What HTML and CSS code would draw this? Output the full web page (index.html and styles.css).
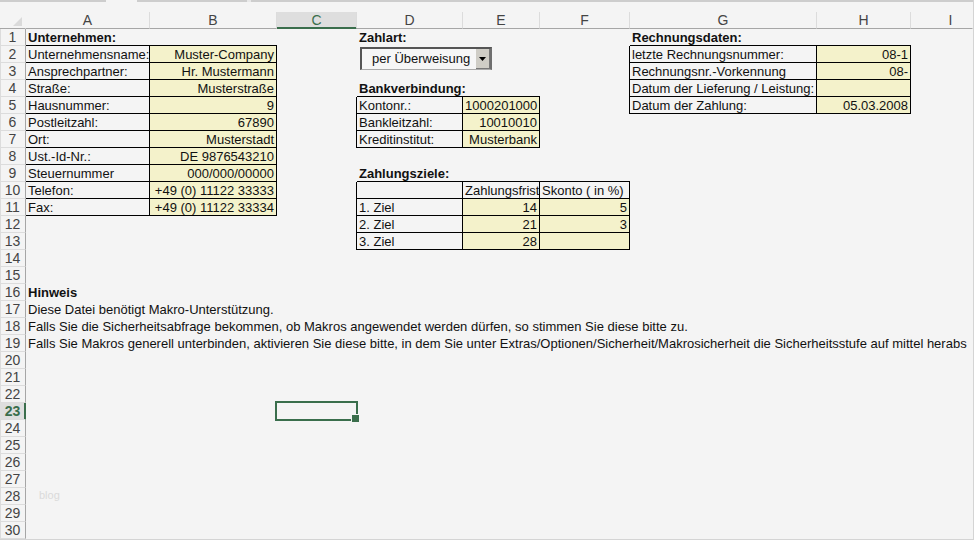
FILE: index.html
```html
<!DOCTYPE html>
<html lang="de">
<head>
<meta charset="utf-8">
<title>Rechnungsdaten</title>
<link rel="stylesheet" href="styles.css">
</head>
<body>
<div class="window">
<div class="strip"><span class="tab"></span><span class="seam"></span></div>
<table class="sheet">
<colgroup>
<col class="c-num"><col class="c-a"><col class="c-b"><col class="c-c"><col class="c-d"><col class="c-e"><col class="c-f"><col class="c-g"><col class="c-h"><col>
</colgroup>
<thead>
<tr><th class="corner"><svg viewBox="0 0 9 9" width="9" height="9" aria-hidden="true"><path d="M9 0V9H0Z" fill="#dadada"/></svg></th><th>A</th><th>B</th><th class="active">C</th><th>D</th><th>E</th><th>F</th><th>G</th><th>H</th><th class="last">I</th></tr>
</thead>
<tbody>
<tr><th>1</th><td class="b title">Unternehmen:</td><td class="b"></td><td></td><td class="title">Zahlart:</td><td></td><td></td><td class="b title">Rechnungsdaten:</td><td class="b"></td><td></td></tr>
<tr><th>2</th><td class="box">Unternehmensname:</td><td class="box val">Muster-Company</td><td></td><td class="control" colspan="2" rowspan="2"><div class="combo"><select aria-label="Zahlart"><option>per Überweisung</option></select><span class="drop"><svg viewBox="0 0 7 4" width="7" height="4" aria-hidden="true"><path d="M0 0H7L3.5 4Z"/></svg></span></div></td><td class="r"></td><td class="box">letzte Rechnungsnummer:</td><td class="box val">08-1</td><td></td></tr>
<tr><th>3</th><td class="box">Ansprechpartner:</td><td class="box val">Hr. Mustermann</td><td></td><td class="r"></td><td class="box">Rechnungsnr.-Vorkennung</td><td class="box val">08-</td><td></td></tr>
<tr><th>4</th><td class="box">Straße:</td><td class="box val">Musterstraße</td><td></td><td class="b title">Bankverbindung:</td><td class="b"></td><td class="r"></td><td class="box">Datum der Lieferung / Leistung:</td><td class="box val"></td><td></td></tr>
<tr><th>5</th><td class="box">Hausnummer:</td><td class="box val">9</td><td class="r"></td><td class="box">Kontonr.:</td><td class="box val">1000201000</td><td class="r"></td><td class="box">Datum der Zahlung:</td><td class="box val">05.03.2008</td><td></td></tr>
<tr><th>6</th><td class="box">Postleitzahl:</td><td class="box val">67890</td><td class="r"></td><td class="box">Bankleitzahl:</td><td class="box val">10010010</td><td colspan="4"></td></tr>
<tr><th>7</th><td class="box">Ort:</td><td class="box val">Musterstadt</td><td class="r"></td><td class="box">Kreditinstitut:</td><td class="box val">Musterbank</td><td colspan="4"></td></tr>
<tr><th>8</th><td class="box">Ust.-Id-Nr.:</td><td class="box val">DE 9876543210</td><td colspan="7"></td></tr>
<tr><th>9</th><td class="box">Steuernummer</td><td class="box val">000/000/00000</td><td></td><td class="b title">Zahlungsziele:</td><td class="b"></td><td class="b"></td><td colspan="3"></td></tr>
<tr><th>10</th><td class="box">Telefon:</td><td class="box val">+49 (0) 11122 33333</td><td class="r"></td><td class="box"></td><td class="box">Zahlungsfrist</td><td class="box">Skonto ( in %)</td><td colspan="3"></td></tr>
<tr><th>11</th><td class="box">Fax:</td><td class="box val">+49 (0) 11122 33334</td><td class="r"></td><td class="box">1. Ziel</td><td class="box val">14</td><td class="box val">5</td><td colspan="3"></td></tr>
<tr><th>12</th><td></td><td></td><td class="r"></td><td class="box">2. Ziel</td><td class="box val">21</td><td class="box val">3</td><td colspan="3"></td></tr>
<tr><th>13</th><td></td><td></td><td class="r"></td><td class="box">3. Ziel</td><td class="box val">28</td><td class="box val"></td><td colspan="3"></td></tr>
<tr><th>14</th><td colspan="9"></td></tr>
<tr><th>15</th><td colspan="9"></td></tr>
<tr><th>16</th><td class="title" colspan="9">Hinweis</td></tr>
<tr><th>17</th><td colspan="9">Diese Datei benötigt Makro-Unterstützung.</td></tr>
<tr><th>18</th><td colspan="9">Falls Sie die Sicherheitsabfrage bekommen, ob Makros angewendet werden dürfen, so stimmen Sie diese bitte zu.</td></tr>
<tr><th>19</th><td class="clip" colspan="9">Falls Sie Makros generell unterbinden, aktivieren Sie diese bitte, in dem Sie unter Extras/Optionen/Sicherheit/Makrosicherheit die Sicherheitsstufe auf mittel herabs</td></tr>
<tr><th>20</th><td colspan="9"></td></tr>
<tr><th>21</th><td colspan="9"></td></tr>
<tr><th>22</th><td colspan="9"></td></tr>
<tr><th class="active">23</th><td></td><td></td><td class="selected"><span class="cursor"></span></td><td colspan="6"></td></tr>
<tr><th>24</th><td colspan="9"></td></tr>
<tr><th>25</th><td colspan="9"></td></tr>
<tr><th>26</th><td colspan="9"></td></tr>
<tr><th>27</th><td colspan="9"></td></tr>
<tr><th>28</th><td class="mark" colspan="9">blog</td></tr>
<tr><th>29</th><td colspan="9"></td></tr>
<tr><th>30</th><td colspan="9"></td></tr>
</tbody>
</table>
</div>
</body>
</html>
```
FILE: styles.css
```css
* {
  box-sizing: border-box;
}

body {
  margin: 0;
  background: #f4f4f4;
  color: #111;
  font-family: "Liberation Sans", Arial, sans-serif;
  font-size: 13px;
  line-height: 16px;
}

.window {
  overflow: hidden;
  border-right: 1px solid #d4d4d4;
  border-bottom: 1px solid #d4d4d4;
}

.strip {
  display: flex;
  gap: 110px;
  height: 2px;
  margin-bottom: 10px;
  padding-left: 106px;
  background: #cdcdcd;
}

.tab {
  width: 31px;
  background: #f4f4f4;
}

.seam {
  width: 4px;
  background: #e8e8e8;
}

.sheet {
  width: 100%;
  table-layout: fixed;
  border-collapse: separate;
  border-spacing: 0;
}

.c-num { width: 26px; }
.c-a { width: 124px; }
.c-b { width: 127px; }
.c-c { width: 80px; }
.c-d { width: 106px; }
.c-e { width: 77px; }
.c-f { width: 90px; }
.c-g { width: 187px; }
.c-h { width: 94px; }

th,
td {
  height: 17px;
  white-space: nowrap;
}

th {
  padding: 0;
  border: 0 solid transparent;
  border-width: 0 1px 1px 0;
  color: #444;
  font-size: 14px;
  font-weight: normal;
  text-align: center;
}

thead th {
  border-right-color: #dcdcdc;
  border-bottom-color: #a6a6a6;
}

thead .corner {
  padding: 2px 3px 0 0;
  border-right-color: #f4f4f4;
  text-align: right;
  line-height: 0;
}

thead .last {
  padding-left: 18px;
  border-right-color: transparent;
}

thead .active {
  background: #dedede;
  border-bottom-color: #3a6e4c;
  box-shadow: inset 0 -1px #3a6e4c;
  color: #3a6e4c;
}

tbody th {
  border-right-color: #a6a6a6;
  border-bottom-color: #dcdcdc;
  box-shadow: inset 1px 0 #dcdcdc;
}

tbody .active {
  background: #dedede;
  border-right-color: #3a6e4c;
  box-shadow: inset -1px 0 #3a6e4c;
  color: #3a6e4c;
  font-weight: bold;
}

td {
  padding: 1px 3px 0 2px;
  text-align: left;
}

.title {
  font-weight: bold;
}

/* Cell rules are drawn inside the cell, so corners meet squarely. */
.r { box-shadow: inset -1px 0 #000; }
.b { box-shadow: inset 0 -1px #000; }
.box { box-shadow: inset -1px -1px #000; }

.val {
  background: #f4f2cb;
  text-align: right;
}

.clip {
  overflow: hidden;
}

.control {
  padding: 1px 3px 0;
  vertical-align: top;
}

.combo {
  position: relative;
  width: 132px;
  height: 23px;
}

.combo select {
  display: block;
  width: 100%;
  height: 100%;
  padding: 0 18px 0 10px;
  appearance: none;
  border: 2px solid #555;
  border-right-color: #6e6e6e;
  border-bottom: 1px solid #aaa;
  border-radius: 0;
  background: #f6f6f6;
  color: #111;
  font: inherit;
}

.drop {
  position: absolute;
  top: 2px;
  right: 2px;
  bottom: 1px;
  display: flex;
  align-items: center;
  justify-content: center;
  width: 14px;
  border-right: 1px solid #777;
  border-bottom: 1px solid #777;
  background: #cfcdc6;
  pointer-events: none;
}

.selected {
  position: relative;
}

.cursor {
  position: absolute;
  inset: -2px -1px -1px -2px;
  border: 2px solid #3a6e4c;
}

.cursor::after {
  content: "";
  position: absolute;
  right: -4px;
  bottom: -4px;
  width: 7px;
  height: 7px;
  border: 1px solid #f4f4f4;
  background: #3a6e4c;
}

.mark {
  padding: 0 0 0 13px;
  color: #dadada;
  font-size: 11px;
  line-height: 14px;
  vertical-align: top;
}
```
